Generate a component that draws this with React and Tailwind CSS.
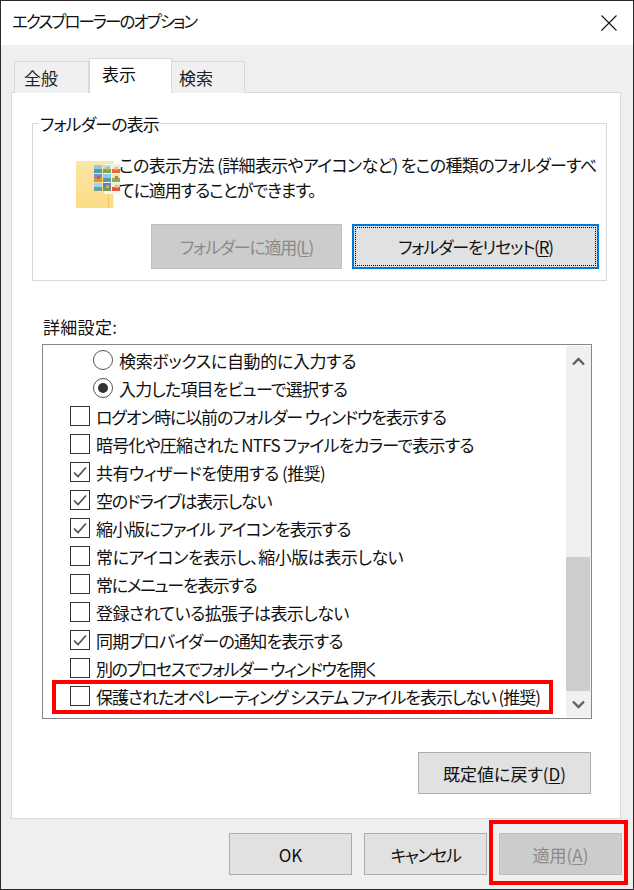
import React from "react";

const rows = [
  { t: "radio", on: false, tr: "tracking-[-0.33px]", label: "検索ボックスに自動的に入力する" },
  { t: "radio", on: true, tr: "tracking-[-0.8px]", label: "入力した項目をビューで選択する" },
  { t: "check", on: false, tr: "tracking-[-1.15px]", label: "ログオン時に以前のフォルダー ウィンドウを表示する" },
  { t: "check", on: false, tr: "tracking-[-0.78px]", label: "暗号化や圧縮された NTFS ファイルをカラーで表示する" },
  { t: "check", on: true, tr: "tracking-[-0.55px]", label: "共有ウィザードを使用する (推奨)" },
  { t: "check", on: true, tr: "tracking-[-1.17px]", label: "空のドライブは表示しない" },
  { t: "check", on: true, tr: "tracking-[-0.95px]", label: "縮小版にファイル アイコンを表示する" },
  { t: "check", on: false, tr: "tracking-[-0.45px]", label: "常にアイコンを表示し、縮小版は表示しない" },
  { t: "check", on: false, tr: "tracking-[-1.36px]", label: "常にメニューを表示する" },
  { t: "check", on: false, tr: "tracking-[-0.56px]", label: "登録されている拡張子は表示しない" },
  { t: "check", on: true, tr: "tracking-[-0.8px]", label: "同期プロバイダーの通知を表示する" },
  { t: "check", on: false, tr: "tracking-[-1.4px]", label: "別のプロセスでフォルダー ウィンドウを開く" },
  { t: "check", on: false, tr: "tracking-[-1.05px]", label: "保護されたオペレーティング システム ファイルを表示しない (推奨)", mark: true },
];

const thumbs = [
  [18, 4, "#8ccbee", "#5f9a94", null],
  [27, 4, "#b5dbef", "#7ba556", "#e0ae3a"],
  [36, 4, "#f4ead2", "#e8693f", "#f2bc3a"],
  [18, 13, "#6a94d6", "#cf9646", "#d8503e"],
  [27, 13, "#8ccbee", "#5f9a94", null],
  [36, 13, "#ecebb8", "#84ae5c", "#e8693f"],
  [18, 22, "#a0d3ef", "#6a9f96", null],
  [27, 22, "#607cc8", "#76935c", "#e0ae3a"],
  [36, 22, "#f4ead2", "#e0583f", "#f2bc3a"],
];

function FolderIcon() {
  return (
    <svg width="46" height="48" viewBox="0 0 46 48" className="shrink-0 block">
      <defs>
        <linearGradient id="fold" x1="0" y1="0" x2="0" y2="1">
          <stop offset="0" stopColor="#fbe6a6" />
          <stop offset="1" stopColor="#fcdc86" />
        </linearGradient>
      </defs>
      <rect x="0" y="0" width="37.5" height="47" rx="1" fill="url(#fold)" />
      <rect x="32" y="14" width="1" height="33" fill="#f0c860" />
      <rect x="28" y="3" width="17" height="30" fill="#f6f6f2" />
      {thumbs.map(([x, y, a, b, c], i) => (
        <g key={i}>
          <rect x={x} y={y} width="8" height="8" fill={a} />
          <rect x={x} y={y + 4} width="8" height="4" fill={b} />
          {c && <rect x={x + 3} y={y + 2} width="3" height="3" fill={c} />}
        </g>
      ))}
    </svg>
  );
}

function Box({ on }) {
  return (
    <span className="w-5 h-5 border border-[#333333] bg-white shrink-0 flex items-center justify-center">
      {on && (
        <svg width="14" height="12" viewBox="0 0 14 12">
          <path d="M1 6.5 L5 10.5 L13 1.5" fill="none" stroke="#4a4a4a" strokeWidth="1.6" />
        </svg>
      )}
    </span>
  );
}

function Radio({ on }) {
  return (
    <span className="w-5 h-5 rounded-full border border-[#555555] bg-white shrink-0 flex items-center justify-center">
      {on && <span className="w-[10px] h-[10px] rounded-full bg-[#333333]" />}
    </span>
  );
}

function Btn({ className, children }) {
  return (
    <div className={"flex items-center justify-center border bg-[#e1e1e1] border-[#adadad] text-[#111111] text-[17px] " + className}>
      {children}
    </div>
  );
}

function Mnemonic({ pre, k }) {
  return (
    <span>
      {pre}(<span className="underline underline-offset-2">{k}</span>)
    </span>
  );
}

export default function App() {
  return (
    <div
      className="w-[634px] h-[890px] border border-[#2a2a2a] bg-[#efefef] flex flex-col overflow-hidden text-[#111111] text-[17px] [font-feature-settings:'palt'] leading-[25px]"
      style={{ fontFamily: '"Noto Sans CJK JP", "Noto Sans", sans-serif' }}
    >
      <div className="h-[44px] bg-white flex items-center justify-between pl-[11px] pr-[16px] shrink-0">
        <span className="text-[16.5px] tracking-[-1.95px] -mt-[3px]">エクスプローラーのオプション</span>
        <svg width="16" height="16" viewBox="0 0 16 16">
          <path d="M0.5 0.5 L15.5 15.5 M15.5 0.5 L0.5 15.5" stroke="#111111" strokeWidth="1.1" fill="none" />
        </svg>
      </div>

      <div className="flex items-end pl-[13px] pt-[13px] shrink-0 relative z-10 -mb-px">
        <div className="w-[75px] h-[32px] border border-[#d9d9d9] border-b-0 bg-[#f0f0f0] pl-[9px] pt-[3px] text-[#222222]">全般</div>
        <div className="w-[83px] h-[35px] border border-[#d9d9d9] border-b-0 bg-white pl-[12px] pt-[2px]">表示</div>
        <div className="w-[73px] h-[32px] border border-[#d9d9d9] border-b-0 border-l-0 bg-[#f0f0f0] pl-[7px] pt-[3px] text-[#222222]">検索</div>
      </div>

      <div className="ml-[10px] w-[610px] h-[727px] border border-[#d9d9d9] bg-white shrink-0 flex flex-col">
        <div className="relative ml-[20px] mr-[13px] mt-[30px] h-[158px] border border-[#d9d9d9] shrink-0">
          <span className="absolute left-[6px] top-[-13px] bg-white px-[1px] tracking-[-0.9px]">フォルダーの表示</span>
          <div className="flex pl-[43px] pt-[37px] h-[100px]">
            <FolderIcon />
            <div className="-ml-[3px] -mt-[9px] whitespace-nowrap flex flex-col">
              <span className="tracking-[-0.67px]">この表示方法 (詳細表示やアイコンなど) をこの種類のフォルダーすべ</span>
              <span className="tracking-[-1.07px]">てに適用することができます。</span>
            </div>
          </div>
          <div className="flex justify-end gap-[10px] pr-[7px]">
            <Btn className="w-[191px] h-[45px] !bg-[#cccccc] !border-[#bfbfbf] !text-[#8a8a8a] tracking-[-1.27px]">
              <Mnemonic pre="フォルダーに適用" k="L" />
            </Btn>
            <div className="w-[247px] h-[45px] border-2 border-[#0078d7] bg-[#e1e1e1] p-px tracking-[-1.2px]">
              <div className="w-full h-full border border-dotted border-black flex items-center justify-center">
                <Mnemonic pre="フォルダーをリセット" k="R" />
              </div>
            </div>
          </div>
        </div>

        <div className="ml-[31px] mt-[33px] h-[25px] tracking-[0.3px]">詳細設定:</div>

        <div className="ml-[30px] mt-[5px] w-[550px] h-[375px] border border-[#828790] flex shrink-0">
          <div className="flex-1 min-w-0 pt-px">
            {rows.map((r, i) => (
              <div
                key={i}
                className={"relative h-[28px] flex items-center gap-[6px] whitespace-nowrap " + (r.t === "radio" ? "pl-[50px]" : "pl-[27px]")}
              >
                {r.t === "radio" ? <Radio on={r.on} /> : <Box on={r.on} />}
                <span className={r.tr}>{r.label}</span>
                {r.mark && (
                  <span className="absolute left-[9px] top-[-2px] w-[501px] h-[34px] border-4 border-[#ff0000]" />
                )}
              </div>
            ))}
          </div>
          <div className="w-[25px] my-px bg-[#f0f0f0] flex flex-col items-center shrink-0">
            <div className="h-[30px] w-full flex items-center justify-center">
              <svg width="13" height="9" viewBox="0 0 13 9">
                <path d="M1 7.5 L6.5 2 L12 7.5" fill="none" stroke="#606060" strokeWidth="2.4" />
              </svg>
            </div>
            <div className="w-[24px] h-[134px] mt-[181px] bg-[#cdcdcd] self-start" />
            <div className="flex-1 w-full flex items-center justify-center">
              <svg width="13" height="9" viewBox="0 0 13 9">
                <path d="M1 1.5 L6.5 7 L12 1.5" fill="none" stroke="#606060" strokeWidth="2.4" />
              </svg>
            </div>
          </div>
        </div>

        <div className="flex justify-end pr-[29px] mt-[33px]">
          <Btn className="w-[173px] h-[42px]">
            <Mnemonic pre="既定値に戻す" k="D" />
          </Btn>
        </div>
      </div>

      <div className="flex justify-end gap-[12px] pr-[11px] pt-[14px]">
        <Btn className="w-[123px] h-[42px]">OK</Btn>
        <Btn className="w-[123px] h-[42px] tracking-[-1.4px]">キャンセル</Btn>
        <div className="relative">
          <Btn className="w-[123px] h-[42px] !bg-[#cccccc] !border-[#bfbfbf] !text-[#8a8a8a]">
            <Mnemonic pre="適用" k="A" />
          </Btn>
          <span className="absolute left-[-10px] top-[-13px] w-[139px] h-[65px] border-4 border-[#ff0000]" />
        </div>
      </div>
    </div>
  );
}
